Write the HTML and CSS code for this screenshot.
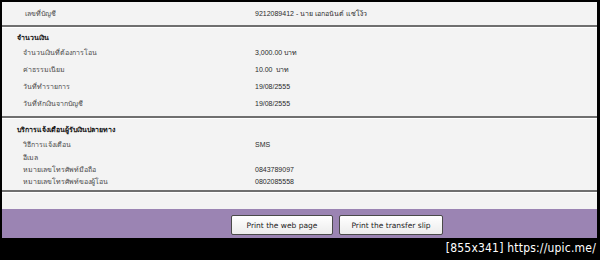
FILE: index.html
```html
<!DOCTYPE html>
<html lang="th">
<head>
    <meta charset="UTF-8">
    <title>โอนเงิน</title>
    <link rel="stylesheet" href="styles.css">
</head>
<body>
    <div class="frame">
        <div class="row top-row">
            <span class="label">เลขที่บัญชี</span>
            <span class="value">9212089412 - นาย เอกอนันต์ แซ่โง้ว</span>
        </div>
        <div class="divider"></div>

        <div class="section amount">
            <div class="section-title">จำนวนเงิน</div>
            <div class="row"><span class="label">จำนวนเงินที่ต้องการโอน</span><span class="value">3,000.00 บาท</span></div>
            <div class="row"><span class="label">ค่าธรรมเนียม</span><span class="value">10.00 &nbsp;บาท</span></div>
            <div class="row"><span class="label">วันที่ทำรายการ</span><span class="value">19/08/2555</span></div>
            <div class="row"><span class="label">วันที่หักเงินจากบัญชี</span><span class="value">19/08/2555</span></div>
        </div>
        <div class="divider"></div>

        <div class="section notify">
            <div class="section-title">บริการแจ้งเตือนผู้รับเงินปลายทาง</div>
            <div class="row first"><span class="label">วิธีการแจ้งเตือน</span><span class="value">SMS</span></div>
            <div class="row"><span class="label">อีเมล</span><span class="value"></span></div>
            <div class="row"><span class="label">หมายเลขโทรศัพท์มือถือ</span><span class="value">0843789097</span></div>
            <div class="row"><span class="label">หมายเลขโทรศัพท์ของผู้โอน</span><span class="value">0802085558</span></div>
        </div>
        <div class="divider"></div>

        <div class="spacer"></div>
        <div class="actions">
            <button class="btn">Print the web page</button>
            <button class="btn wide">Print the transfer slip</button>
        </div>
    </div>
    <div class="caption">[855x341] https://upic.me/</div>
</body>
</html>
```

FILE: styles.css
```css
body {
    margin: 0;
    background-color: #000000;
    font-family: "Liberation Sans", Tahoma, sans-serif;
    font-size: 7px;
    color: #333333;
}

.frame {
    margin: 2px 3px 0 2px;
    background-color: #f3f3f3;
}

.row {
    display: grid;
    grid-template-columns: 232px 1fr;
    padding-left: 21px;
    height: 17px;
    align-items: center;
}

.top-row {
    height: 23px;
    padding-left: 23px;
    grid-template-columns: 230px 1fr;
}

.label {
    color: #4a4a4a;
}

.value {
    color: #2a2a2a;
}

.divider {
    border-top: 2px solid #6f6f6f;
    border-bottom: 1px solid #ffffff;
}

.section {
    padding-bottom: 4px;
}

.section-title {
    font-weight: bold;
    color: #111111;
    padding-left: 15px;
    height: 13px;
    line-height: 13px;
}

.amount {
    padding-top: 3px;
}

.notify {
    padding-top: 4px;
    padding-bottom: 3px;
}

.notify .row {
    height: 12px;
}

.notify .row.first {
    height: 14px;
    margin-top: 1px;
}

.spacer {
    height: 16px;
}

.actions {
    background-color: #9b84b3;
    display: flex;
    gap: 6px;
    padding: 6px 0 3px 229px;
}

.btn {
    width: 102px;
    height: 20px;
    font-family: "DejaVu Sans", Verdana, sans-serif;
    font-size: 7.5px;
    color: #222222;
    background: linear-gradient(#ffffff, #ececec);
    border: 1px solid #4a4a4a;
    border-radius: 2px;
    padding: 0;
}

.btn.wide {
    width: 104px;
}

.caption {
    text-align: right;
    color: #ffffff;
    font-family: "DejaVu Sans Condensed", "DejaVu Sans", sans-serif;
    font-size: 12px;
    letter-spacing: 0.2px;
    padding: 3px 4px 0 0;
}
```
